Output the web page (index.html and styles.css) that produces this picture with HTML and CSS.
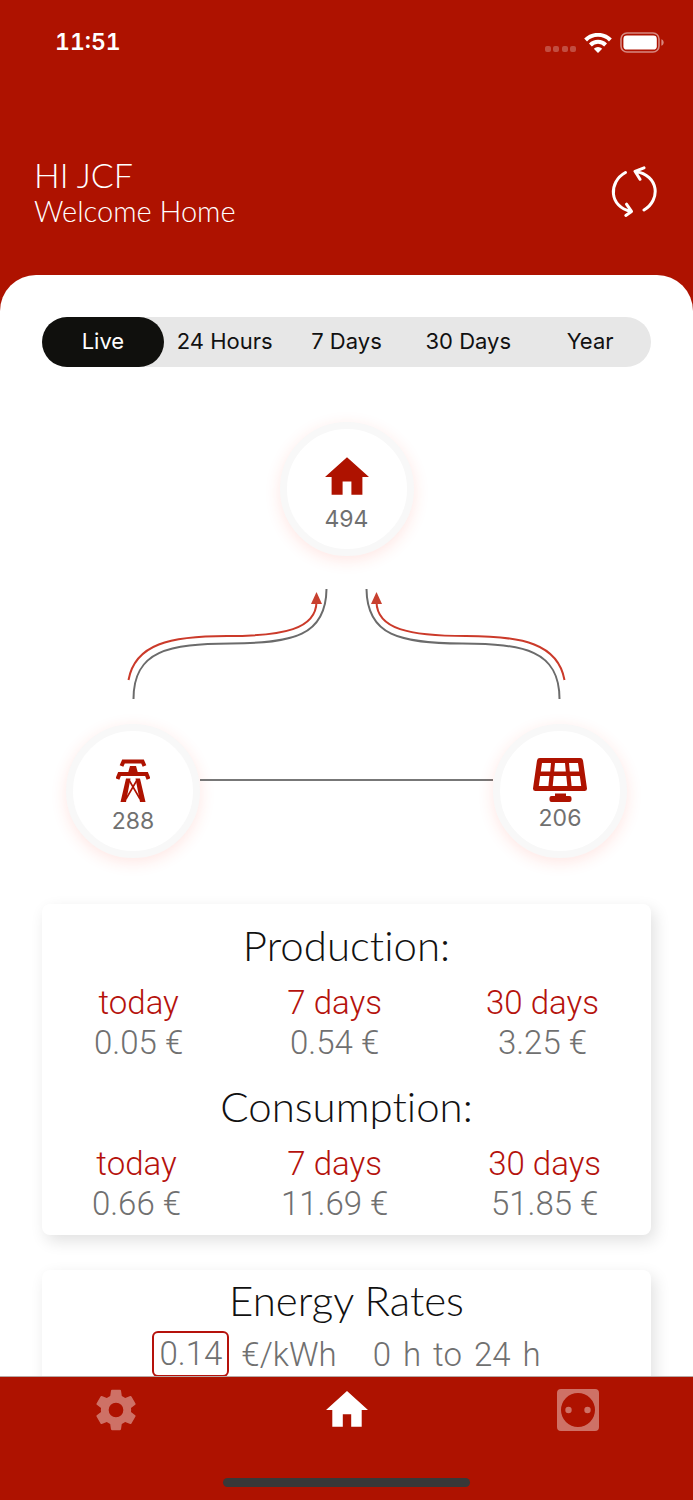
FILE: index.html
```html
<!DOCTYPE html>
<html lang="en">

<head>
  <meta charset="UTF-8" />
  <meta name="viewport" content="width=device-width, initial-scale=1.0" />
  <title>Home Energy</title>
  <link rel="stylesheet" href="styles.css">
</head>

<body>
  <div class="status-bar">
    <span class="time">11:51</span>
    <div class="status-icons">
      <svg class="signal" viewBox="0 0 31 7" aria-hidden="true">
        <rect x="0" y="0" width="6" height="6" rx="2" />
        <rect x="8" y="0" width="6" height="6" rx="2" />
        <rect x="17" y="0" width="6" height="6" rx="2" />
        <rect x="25" y="0" width="6" height="6" rx="2" />
      </svg>
      <svg class="wifi" viewBox="0 0 28 20" aria-hidden="true">
        <path d="M1.600 7a17.500 17.500 0 0 1 24.800 0M6.400 12a10.800 10.800 0 0 1 15.200 0" fill="none" stroke="#fff" stroke-width="4" />
        <path d="M14 20l-4.200-4.200a6 6 0 0 1 8.400 0z" fill="#fff" />
      </svg>
      <svg class="battery" viewBox="0 0 44 21" aria-hidden="true">
        <rect x="1" y="1" width="38" height="19" rx="6" fill="none" stroke="#fff" stroke-opacity=".5" stroke-width="1.600" />
        <rect x="3.400" y="3.600" width="33.400" height="14" rx="3.400" fill="#fff" />
        <path d="M41.400 7.200c3 1 3 5.600 0 6.600z" fill="#fff" fill-opacity=".5" />
      </svg>
    </div>
  </div>

  <header>
    <div>
      <h1>HI JCF</h1>
      <p>Welcome Home</p>
    </div>
    <button class="refresh" aria-label="Refresh">
      <svg viewBox="0 0 48 52">
        <path d="M15.500 6.500C-2 16-1 41 21 45.500M15.800 49.400l5.700-4-5-7.200" />
        <path d="M34 44C51 34 49 9 25.500 5.500M34 1.800l-9 3.500 5 8" />
      </svg>
    </button>
  </header>

  <main>
    <div class="range">
      <button class="active">Live</button>
      <button>24 Hours</button>
      <button>7 Days</button>
      <button>30 Days</button>
      <button>Year</button>
    </div>

    <section class="diagram">
      <div class="node">
        <svg class="icon-home" viewBox="2 3 20 17">
          <path d="M10 20v-6h4v6h5v-8h3L12 3 2 12h3v8z" />
        </svg>
        <span>494</span>
      </div>

      <svg class="flows" viewBox="0 0 561 116">
        <defs>
          <g id="flow">
            <path class="wire" d="M67.500 113C67.500 64 103 58 165 57.500S260 50 260.500 3" />
            <path class="current" d="M62.500 94C69 58 104 50 161 50S250 43 250.500 16" />
            <path class="arrow" d="M250.500 6l5.500 12h-11z" />
          </g>
        </defs>
        <use href="#flow" />
        <use href="#flow" transform="translate(561 0) scale(-1 1)" />
      </svg>

      <div class="sources">
        <div class="node">
          <svg class="icon-grid" viewBox="0 0 34 44">
            <path d="M5.500 7l2-4.500h19l2 4.500M1.500 20l2-5h27l2 5" fill="none" stroke="#ae1200" stroke-width="4" />
            <path d="M14 7h6l2 7h-10z" />
            <path d="M10 19.500h4.500L10 43H4.500zM19.500 19.500H24L29.500 43H24z" />
            <path d="M13 21l11 19M21 21L10 40" fill="none" stroke="#ae1200" stroke-width="1.600" />
          </svg>
          <span>288</span>
        </div>
        <div class="link"></div>
        <div class="node">
          <svg class="icon-solar" viewBox="0 0 54 44">
            <path fill-rule="evenodd" d="M7 0h40a3 3 0 0 1 3 2.400l4 28a2.500 2.500 0 0 1-2.500 2.600h-49A2.500 2.500 0 0 1 0 30.400l4-28A3 3 0 0 1 7 0zM9 5L7.800 13.500h9.400L18 5zM22 5l-.8 8.500h11.600L32 5zM36 5l.8 8.500h9.400L45 5zM7.200 18L5.800 28h9.600l1-10zM20.700 18l-1 10h14.600l-1-10zM37.600 18l1 10h9.600l-1.400-10z" />
            <path d="M22 35.500h11v2.500h3.500a2 2 0 0 1 2 2v2a2 2 0 0 1-2 2h-18a2 2 0 0 1-2-2v-2a2 2 0 0 1 2-2H22z" />
          </svg>
          <span>206</span>
        </div>
      </div>
    </section>

    <section class="card">
      <h2>Production:</h2>
      <dl>
        <div><dt>today</dt><dd>0.05 €</dd></div>
        <div><dt>7 days</dt><dd>0.54 €</dd></div>
        <div><dt>30 days</dt><dd>3.25 €</dd></div>
      </dl>
      <h2>Consumption:</h2>
      <dl>
        <div><dt>today</dt><dd>0.66 €</dd></div>
        <div><dt>7 days</dt><dd>11.69 €</dd></div>
        <div><dt>30 days</dt><dd>51.85 €</dd></div>
      </dl>
    </section>

    <section class="card rates">
      <h2>Energy Rates</h2>
      <div class="rate">
        <input type="text" id="rate" value="0.14" />
        <label for="rate">€/kWh</label>
        <div class="hours">
          <span>0</span>
          <span>h</span>
          <span>to</span>
          <span>24</span>
          <span>h</span>
        </div>
      </div>
    </section>
  </main>

  <nav>
    <div class="tabs">
      <a href="#settings" aria-label="Settings">
        <svg class="tab-icon" viewBox="2 2 20 20">
          <path d="M19.140 12.940c.04-.3.060-.610.060-.940s-.02-.640-.07-.940l2.030-1.580c.18-.14.230-.41.120-.610l-1.920-3.320c-.12-.22-.37-.29-.59-.22l-2.390.960c-.5-.38-1.030-.7-1.620-.940L14.400 2.810c-.04-.24-.24-.41-.48-.41h-3.840c-.24 0-.43.170-.47.410L9.250 5.350c-.59.240-1.130.57-1.620.940L5.240 5.330c-.22-.08-.47 0-.59.220L2.740 8.870c-.12.210-.08.470.120.610l2.030 1.580c-.05.300-.09.630-.09.940s.02.640.070.940l-2.030 1.580c-.18.140-.23.410-.12.610l1.920 3.320c.12.220.37.290.59.220l2.390-.96c.5.380 1.030.7 1.620.940l.36 2.540c.05.240.24.410.480.410h3.840c.24 0 .44-.17.470-.41l.36-2.540c.59-.24 1.130-.56 1.620-.94l2.390.96c.22.080.47 0 .59-.22l1.920-3.320c.12-.22.070-.47-.12-.61zM12 15.500a3.500 3.500 0 1 1 0-7 3.500 3.500 0 0 1 0 7z" />
        </svg>
      </a>
      <a href="#home" class="active" aria-label="Home">
        <svg class="tab-icon" viewBox="2 2 20 20">
          <path d="M10 20v-6h4v6h5v-8h3L12 3 2 12h3v8z" />
        </svg>
      </a>
      <a href="#devices" aria-label="Devices">
        <svg class="tab-icon" viewBox="0 0 42 42">
          <path fill-rule="evenodd" d="M4 0h34a4 4 0 0 1 4 4v34a4 4 0 0 1-4 4H4a4 4 0 0 1-4-4V4a4 4 0 0 1 4-4zM21 4a17 17 0 1 0 0 34 17 17 0 0 0 0-34z" />
          <circle cx="11.500" cy="21" r="3.200" />
          <circle cx="30.500" cy="21" r="3.200" />
        </svg>
      </a>
    </div>
    <div class="home-indicator"></div>
  </nav>
</body>

</html>
```

FILE: styles.css
```css
* {
  margin: 0;
  padding: 0;
  box-sizing: border-box;
}

body {
  font-family: Roboto, sans-serif;
  background-color: #ae1200;
  height: 100vh;
  display: flex;
  flex-direction: column;
  overflow: hidden;
}

button {
  border: none;
  background: none;
  cursor: pointer;
}

.status-bar {
  height: 84px;
  padding: 0 29px 0 55px;
  display: flex;
  flex-shrink: 0;
  justify-content: space-between;
  align-items: center;
  color: white;
}

.time {
  font-family: Inter, sans-serif;
  font-size: 23px;
  font-weight: 600;
  font-variant-numeric: tabular-nums;
}

.status-icons {
  display: flex;
  align-items: flex-end;
  gap: 8px;
}

.signal {
  width: 31px;
  height: 7px;
  fill: rgba(255, 255, 255, 0.25);
}

.wifi {
  width: 28px;
  height: 20px;
}

.battery {
  width: 44px;
  height: 21px;
}

header {
  height: 191px;
  padding: 72px 35px 0 34px;
  display: flex;
  flex-shrink: 0;
  justify-content: space-between;
  align-items: flex-start;
  color: white;
  font-family: Lato, sans-serif;
}

header h1 {
  font-size: 34px;
  font-weight: 300;
  line-height: 38px;
}

header p {
  font-size: 29px;
  font-weight: 300;
  line-height: 34px;
}

.refresh {
  margin-top: 10px;
}

.refresh svg {
  display: block;
  width: 48px;
  height: 52px;
  fill: none;
  stroke: #fff;
  stroke-width: 3;
  stroke-linecap: round;
  stroke-linejoin: round;
}

main {
  flex: 1;
  min-height: 0;
  overflow: hidden;
  padding: 42px 42px 0;
  background-color: #fff;
  border-radius: 36px 36px 0 0;
}

.range {
  display: flex;
  height: 50px;
  border-radius: 25px;
  background-color: #e7e7e7;
}

.range button {
  flex: 1;
  padding-bottom: 2px;
  border-radius: 25px;
  font-family: Inter, sans-serif;
  font-size: 22px;
  color: #111;
  white-space: nowrap;
}

.range .active {
  background-color: #10100d;
  color: white;
}

.diagram {
  max-width: 561px;
  margin: 55px auto 0;
  display: flex;
  flex-direction: column;
  align-items: center;
}

.node {
  width: 134px;
  height: 134px;
  padding-top: 12px;
  border: 7px solid #f8f8f8;
  border-radius: 50%;
  background-color: #fff;
  box-shadow: 0 4px 16px rgba(255, 60, 40, 0.13);
  display: flex;
  flex-direction: column;
  align-items: center;
  justify-content: center;
  color: #707070;
  line-height: 28px;
}

.node svg {
  fill: #ae1200;
}

.node span {
  font-family: Inter, sans-serif;
  font-size: 23px;
}

.icon-home {
  width: 44px;
  height: 38px;
  margin-bottom: 10px;
}

.icon-grid {
  width: 34px;
  height: 44px;
  margin-bottom: 4px;
}

.icon-solar {
  width: 54px;
  height: 44px;
  margin-bottom: 2px;
}

/* keeps the panel slightly higher than its label */
.sources .icon-solar + span {
  margin-bottom: 4px;
}

.flows {
  width: 100%;
  margin: 30px 0 22px;
  fill: none;
  stroke-width: 2;
}

.wire {
  stroke: #6b6b6b;
}

.current {
  stroke: #cb3a2a;
}

.arrow {
  fill: #c8402f;
}

.sources {
  width: 100%;
  display: flex;
}

.link {
  flex: 1;
  height: 2px;
  margin-top: 55px;
  background-color: #777;
}

.card {
  margin-top: 46px;
  padding: 16px 0 11px;
  border-radius: 8px;
  background-color: #fff;
  box-shadow: 4px 6px 16px rgba(0, 0, 0, 0.12);
  font-size: 33px;
  font-weight: 300;
  color: #707070;
}

.card h2 {
  font-family: Lato, sans-serif;
  font-size: 42px;
  font-weight: 300;
  font-variant-ligatures: none;
  line-height: 50px;
  color: #111;
  text-align: center;
}

.card dl {
  display: flex;
  justify-content: space-around;
  text-align: center;
  line-height: 40px;
  margin: 13px 0 18px;
}

.card dl:last-child {
  margin-bottom: 0;
}

.card dt {
  color: #b5120c;
}

.card.rates {
  margin-top: 35px;
  padding-top: 5px;
}

.rate {
  display: flex;
  justify-content: center;
  line-height: 48px;
  margin-top: 6px;
}

.rate input {
  width: 77px;
  height: 46px;
  border: 2px solid #b5120c;
  border-radius: 6px;
  background: none;
  font: inherit;
  color: inherit;
  text-align: center;
}

.rate label {
  margin-left: 12px;
}

.hours {
  display: flex;
  gap: 12px;
  margin-left: 36px;
}

nav {
  height: 124px;
  flex-shrink: 0;
  padding: 12px 0 13px;
  border-top: 1px solid #b9a9a6;
  display: flex;
  flex-direction: column;
  justify-content: space-between;
  align-items: center;
}

.tabs {
  width: 100%;
  display: flex;
}

.tabs a {
  flex: 1;
  display: flex;
  justify-content: center;
  opacity: 0.4;
}

.tabs .active {
  opacity: 1;
}

.tab-icon {
  width: 42px;
  height: 42px;
  fill: #fff;
}

.home-indicator {
  width: 247px;
  height: 9px;
  border-radius: 5px;
  background-color: #383838;
}
```
